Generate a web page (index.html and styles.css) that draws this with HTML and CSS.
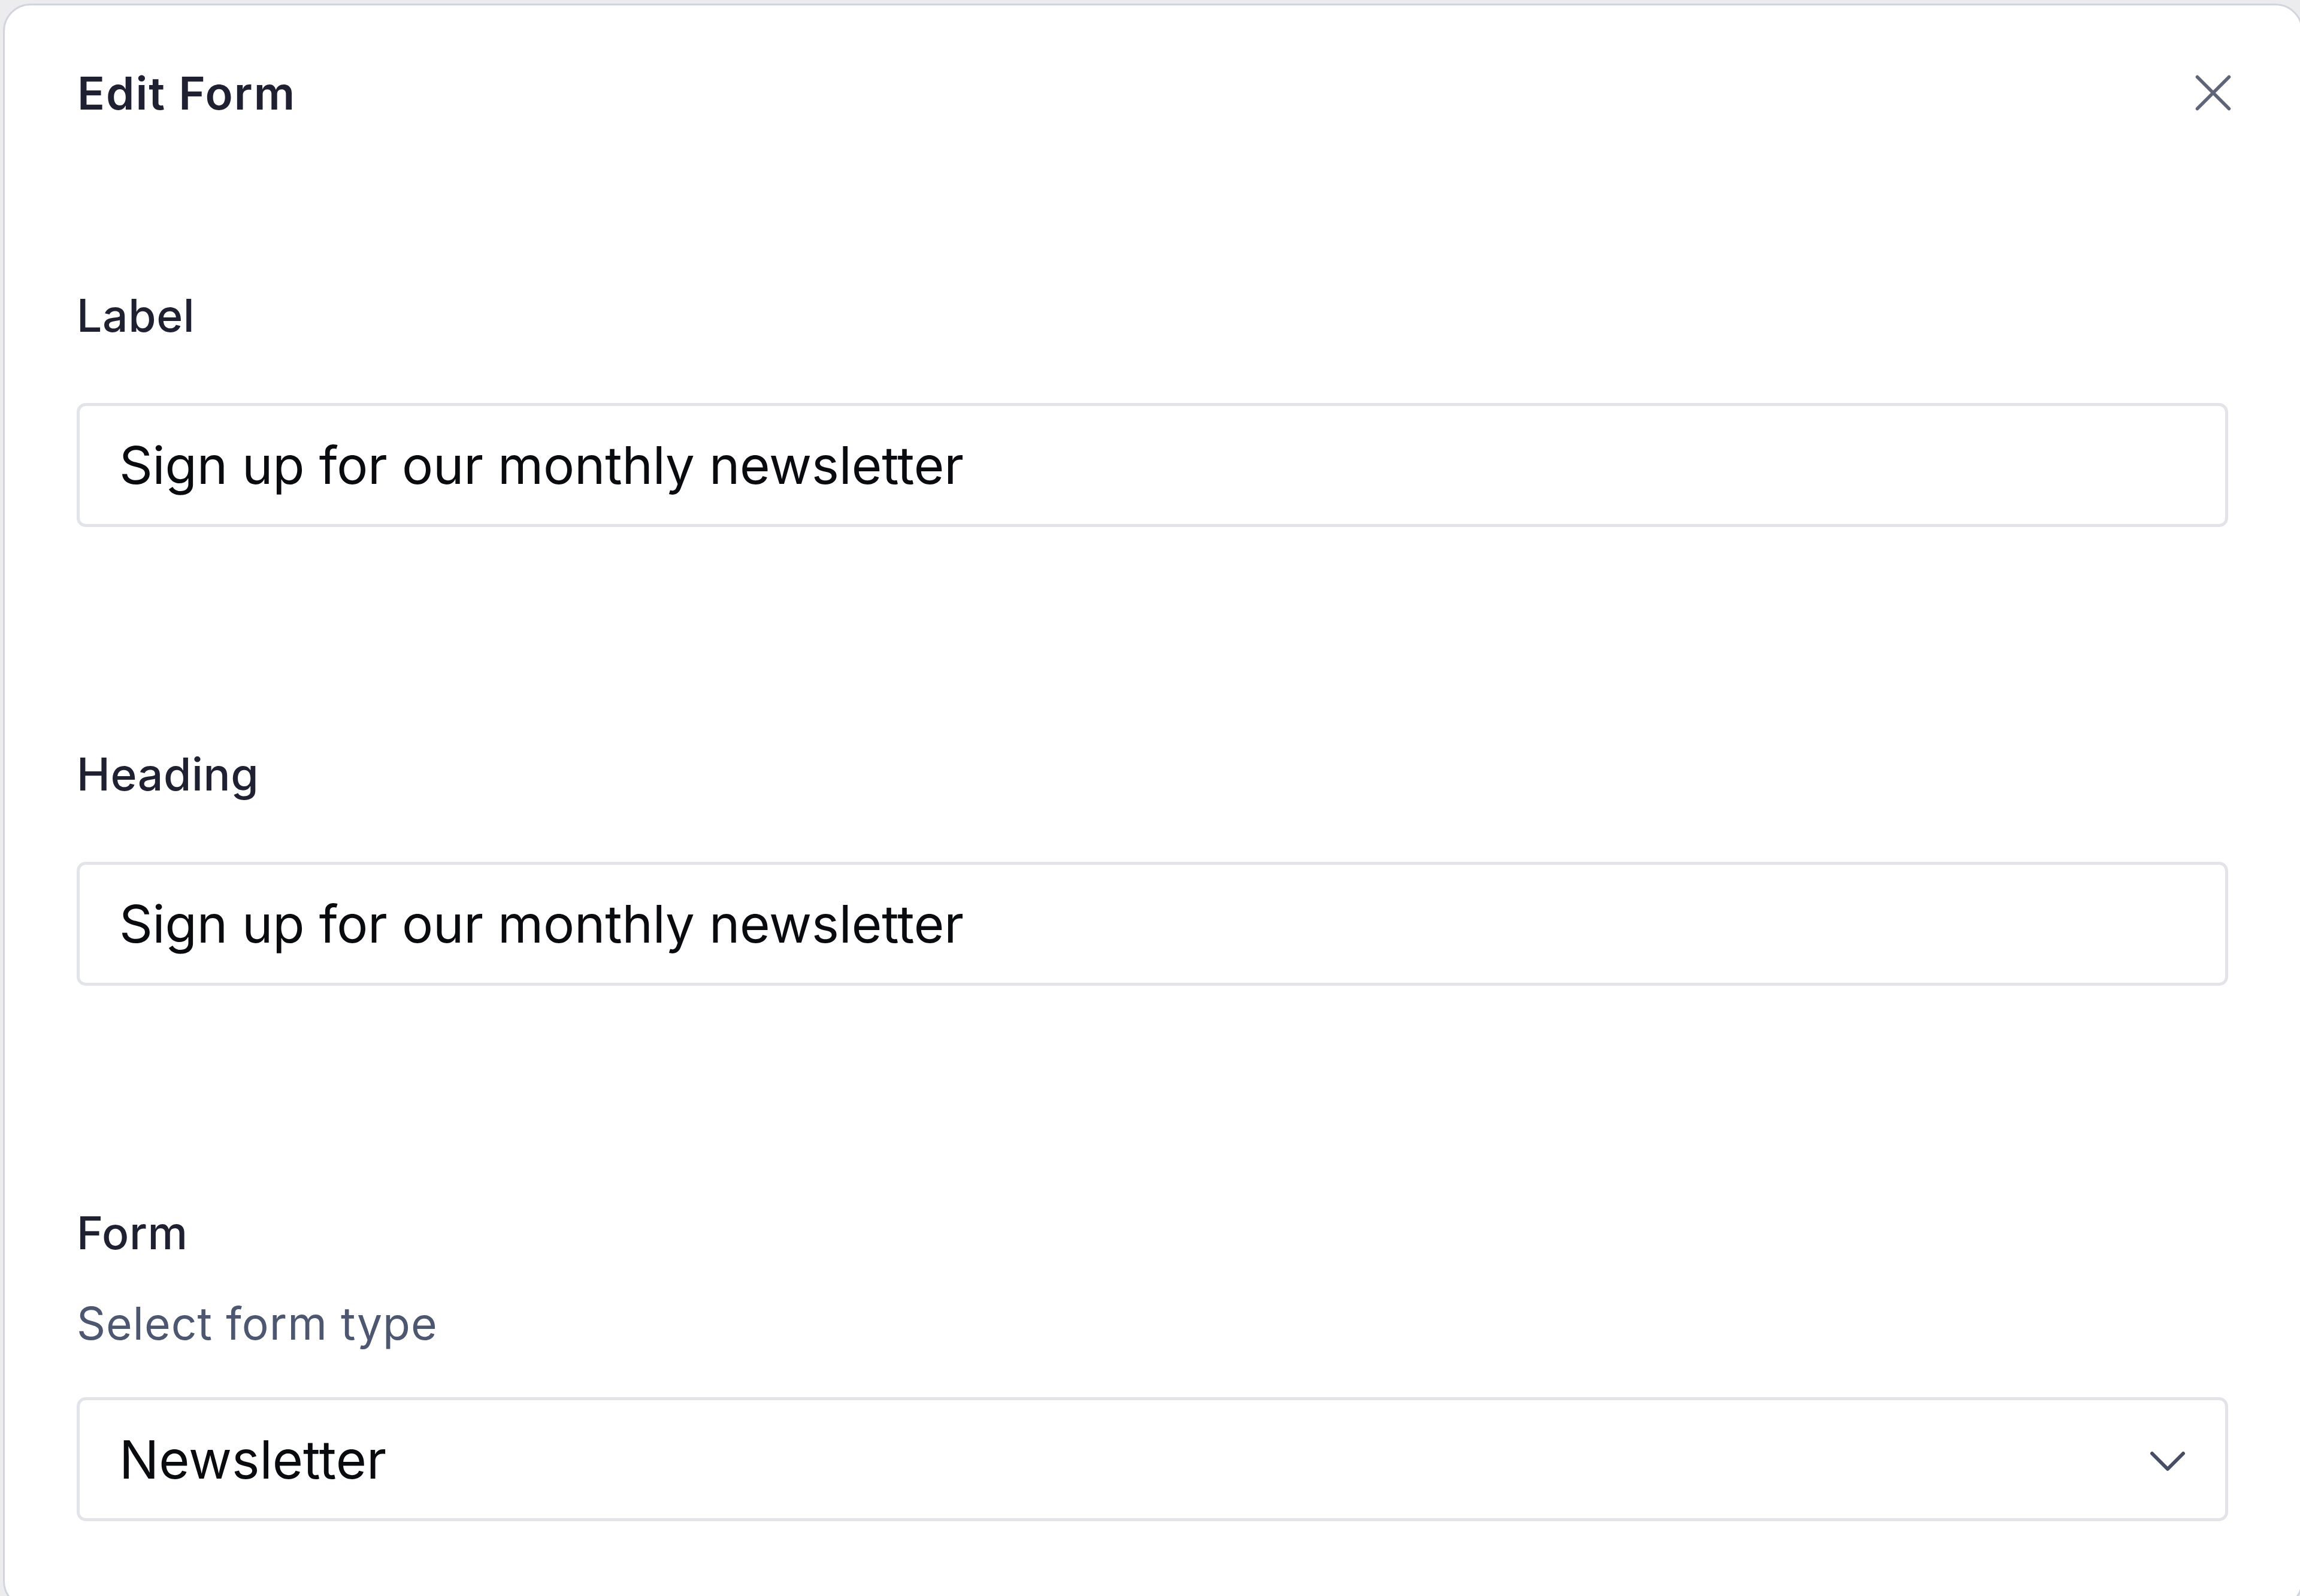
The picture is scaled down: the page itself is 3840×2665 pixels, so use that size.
FILE: index.html
```html
<!DOCTYPE html>
<html lang="en">
<head>
<meta charset="utf-8">
<title>Edit Form</title>
<link rel="stylesheet" href="styles.css">
</head>
<body>
<div class="dialog">
  <div class="header">
    <h1 class="title">Edit Form</h1>
    <button class="close" type="button" aria-label="Close">
      <svg width="60" height="60" viewBox="0 0 60 60" fill="none"><path d="M3.5 3.5L56.5 56.5M56.5 3.5L3.5 56.5" stroke="#5f6478" stroke-width="5.5" stroke-linecap="round"/></svg>
    </button>
  </div>
  <div class="field">
    <label class="label" for="f-label">Label</label>
    <input class="input" id="f-label" type="text" value="Sign up for our monthly newsletter">
  </div>
  <div class="field">
    <label class="label" for="f-heading">Heading</label>
    <input class="input" id="f-heading" type="text" value="Sign up for our monthly newsletter">
  </div>
  <div class="field">
    <div class="label-group">
      <div class="label">Form</div>
      <div class="hint">Select form type</div>
    </div>
    <div class="select">
      <span class="select-value">Newsletter</span>
      <svg class="chevron" width="60" height="36" viewBox="0 0 60 36" fill="none"><path d="M4 4L30 30L56 4" stroke="#474d64" stroke-width="6" stroke-linecap="round" stroke-linejoin="round"/></svg>
    </div>
  </div>
</div>
</body>
</html>
```

FILE: styles.css
```css
html, body {
  margin: 0;
  padding: 0;
}
body {
  background: #ececef;
  height: 2665px;
  overflow: hidden;
  font-family: Inter, "Noto Sans", "Liberation Sans", sans-serif;
}
.dialog {
  box-sizing: border-box;
  margin: 6px 0 0 5px;
  width: 3840px;
  height: 2680px;
  background: #ffffff;
  border: 3px solid #d3d5de;
  border-radius: 46px;
  padding: 96px 122px 0 120px;
  display: flex;
  flex-direction: column;
}
.header {
  display: flex;
  align-items: center;
  justify-content: space-between;
  height: 100px;
  margin-bottom: 272px;
}
.title {
  margin: 0 0 0 1px;
  font-size: 76px;
  line-height: 100px;
  font-weight: 600;
  letter-spacing: 2px;
  color: #1f2133;
}
.close {
  border: 0;
  background: none;
  padding: 0;
  margin-right: -5px;
  width: 60px;
  height: 60px;
  display: flex;
}
.field {
  display: flex;
  flex-direction: column;
  gap: 96px;
  margin-bottom: 363px;
}
.label {
  font-size: 75px;
  line-height: 100px;
  font-weight: 500;
  letter-spacing: 0.6px;
  color: #1f2133;
}
.label-group {
  display: flex;
  flex-direction: column;
  gap: 51px;
}
.field:last-child {
  gap: 73px;
}
.hint {
  font-size: 75px;
  line-height: 100px;
  font-weight: 400;
  letter-spacing: 1px;
  color: #4e5771;
}
.input,
.select {
  box-sizing: border-box;
  width: 100%;
  height: 207px;
  margin: 0;
  border: 5px solid #e3e4e9;
  border-radius: 15px;
  background: #ffffff;
  padding: 0 66px 0 66px;
  font-family: Inter, "Noto Sans", "Liberation Sans", sans-serif;
  font-size: 88px;
  font-weight: 400;
  color: #0a0b0f;
  outline: none;
}
.input {
  font-size: 87px;
  letter-spacing: -0.2px;
}
.select {
  display: flex;
  align-items: center;
  justify-content: space-between;
  padding-right: 66px;
}
.select-value {
  line-height: 1;
}
.chevron {
  margin-top: 8px;
}
```
